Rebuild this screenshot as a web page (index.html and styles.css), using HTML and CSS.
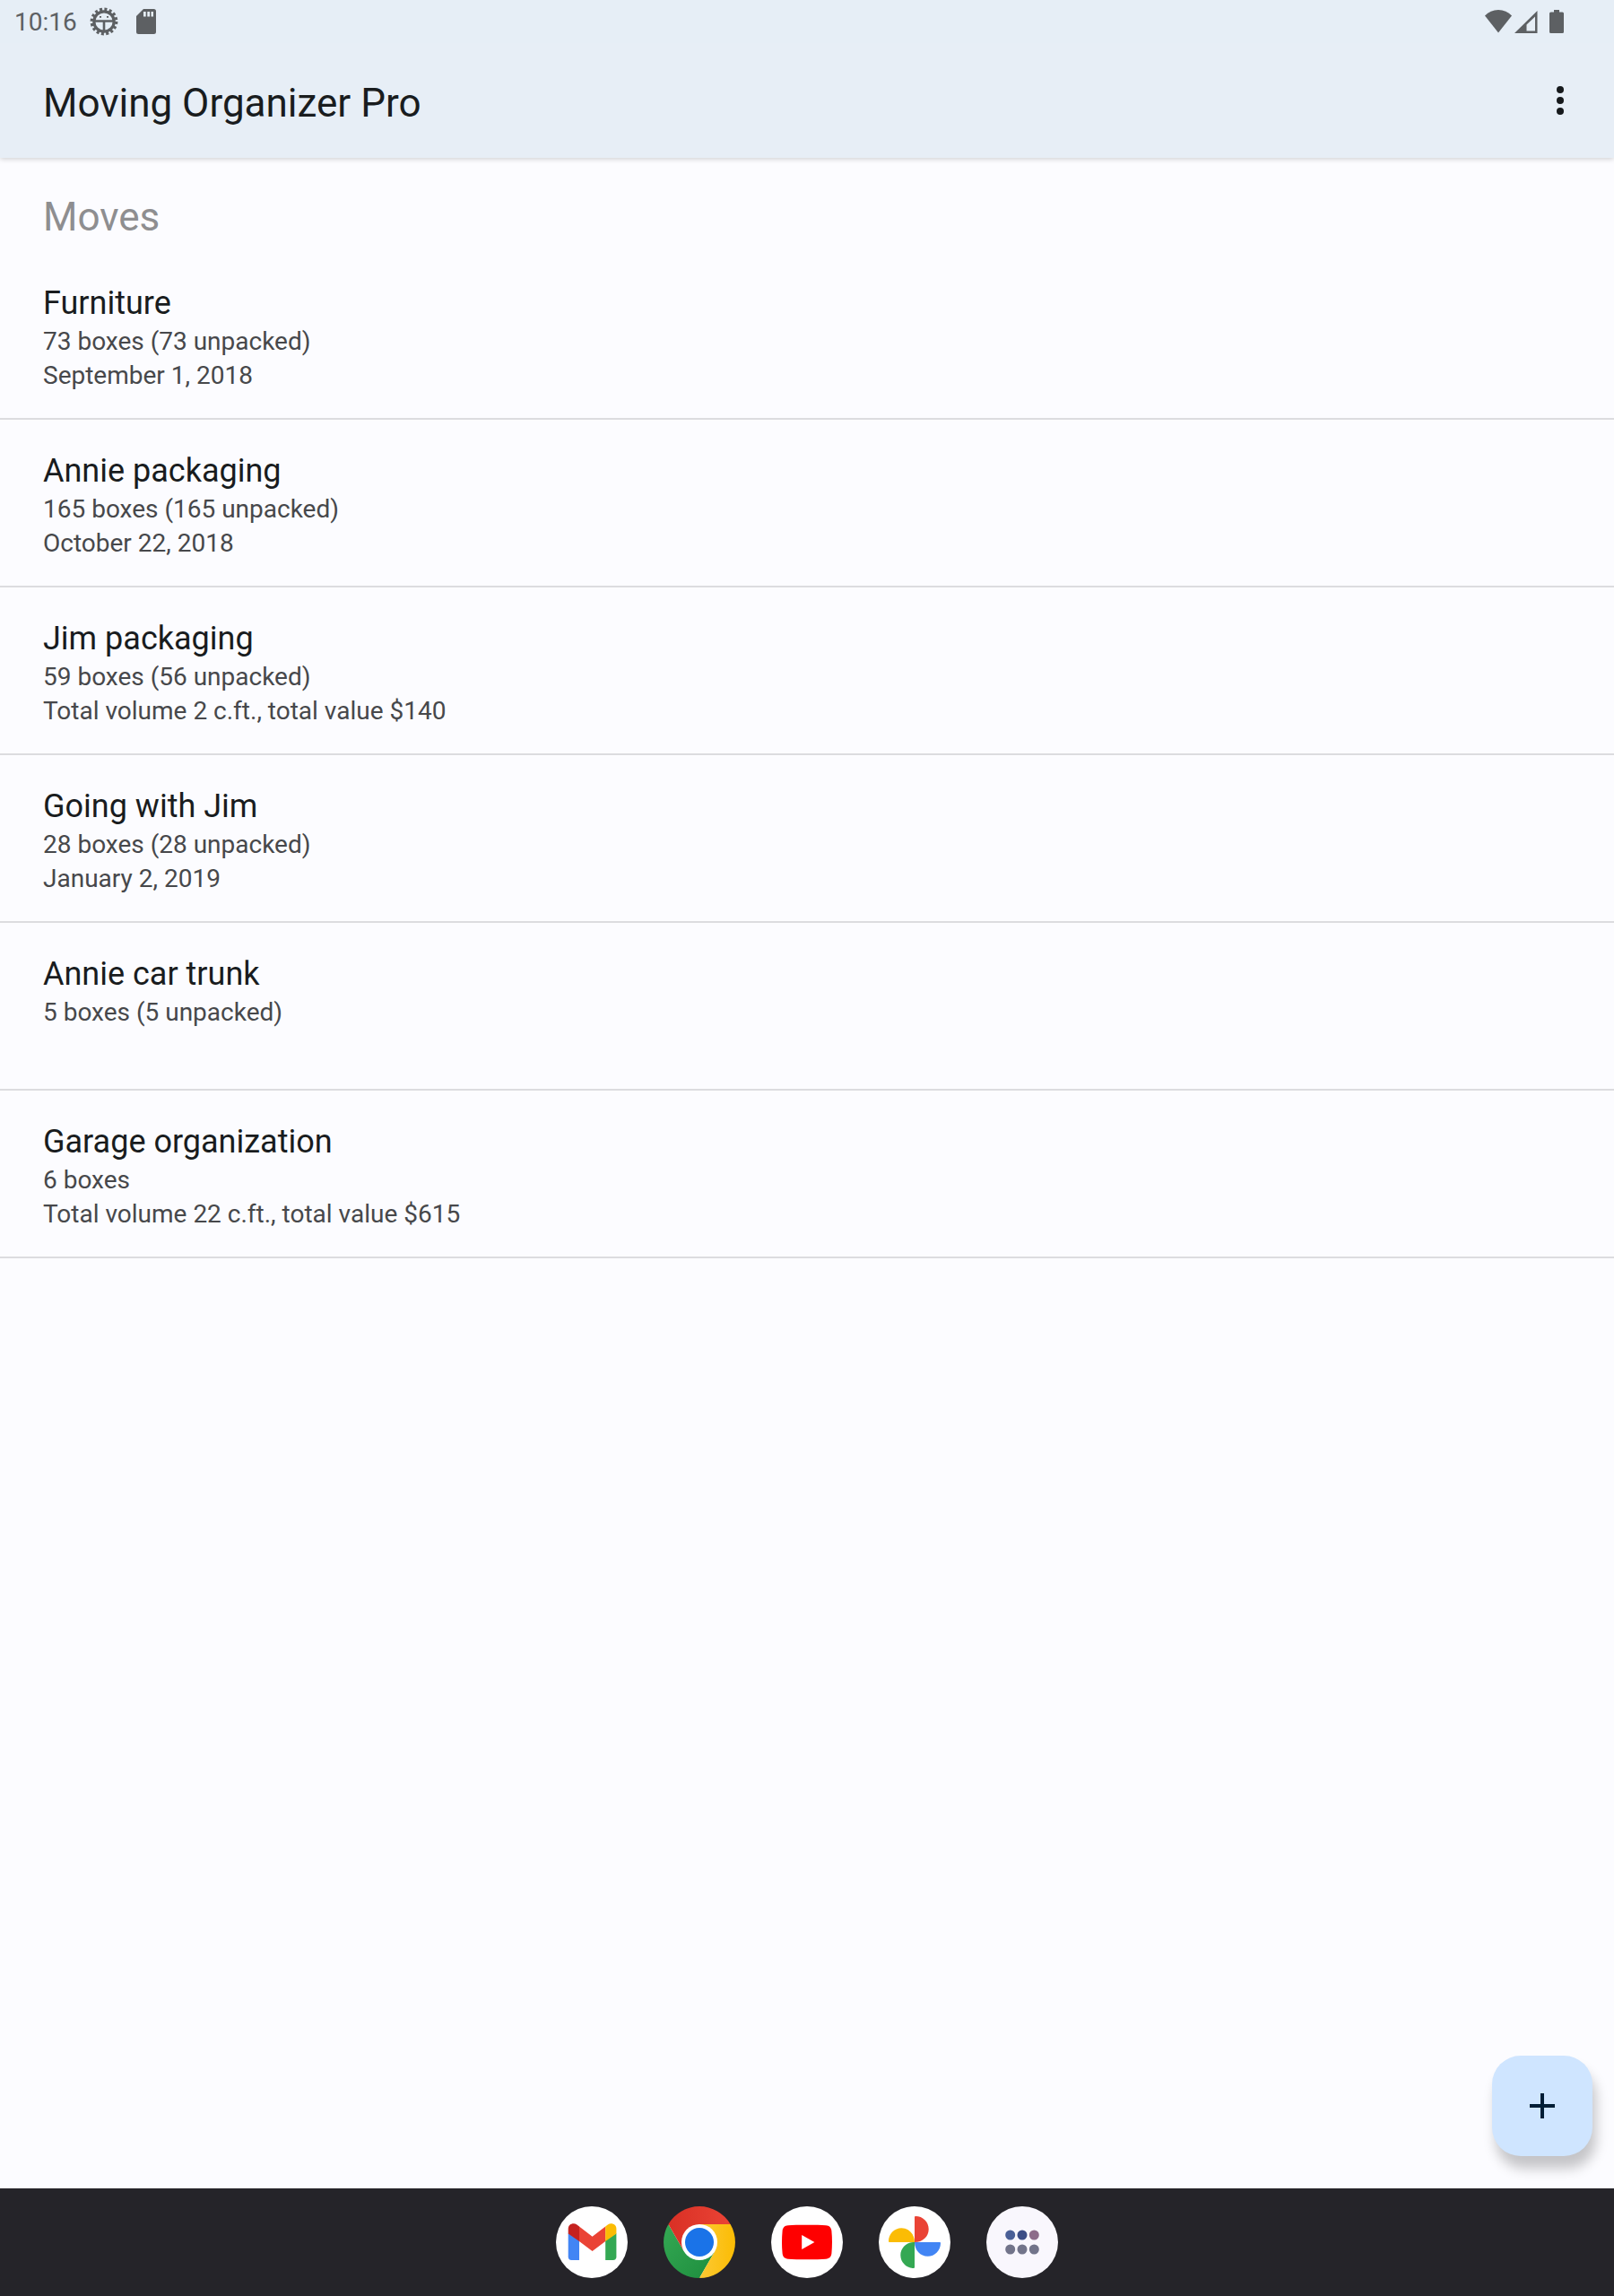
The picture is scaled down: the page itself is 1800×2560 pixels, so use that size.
FILE: index.html
```
<!DOCTYPE html>
<html lang="en">
<head>
    <meta charset="UTF-8">
    <meta name="viewport" content="width=device-width, initial-scale=1.0">
    <title>Moving Organizer Pro</title>
    <link rel="stylesheet" href="styles.css">
</head>
<body>
    <div class="status-bar">
        <div class="status-left">
            <span class="clock">10:16</span>
            <svg class="icon-gear" width="32" height="32" viewBox="0 0 32 32" fill="none" stroke="#5d6063">
                <circle cx="16" cy="16" r="13.7" stroke-width="3.4" stroke-dasharray="3 2.38"/>
                <circle cx="16" cy="16" r="11.2" stroke-width="3.2"/>
                <path d="M5 15.500h22M16 16v11" stroke-width="2.6"/>
                <path d="M11 10.800h2M19 10.800h2" stroke-width="1.8"/>
            </svg>
            <svg width="22" height="28" viewBox="0 0 22 28">
                <path fill="#5d6063" fill-rule="evenodd" d="M8 0h11.500a2.500 2.500 0 0 1 2.500 2.500v23a2.500 2.500 0 0 1-2.500 2.500h-17A2.500 2.500 0 0 1 0 25.500V8zM8 3v5.500h2.700V3zM12.300 3v5.500H15V3zM16.500 3v5.500h2.500V3z"/>
            </svg>
        </div>
        <div class="status-right">
            <svg width="30" height="26" viewBox="0 0 30 26">
                <path fill="#5d6063" d="M15 25.500L0 6.500C4 2.300 9 0 15 0s11 2.300 15 6.500z"/>
            </svg>
            <svg class="icon-signal" width="26" height="26" viewBox="0 0 26 26">
                <path fill="#5d6063" fill-rule="evenodd" d="M25.500 1v25H0zM23 7.500L13.500 16.500v7H23z"/>
            </svg>
            <svg width="16" height="26" viewBox="0 0 16 26">
                <path fill="#5d6063" d="M5 0h6v2.500h3.500A1.500 1.500 0 0 1 16 4v20.500a1.500 1.500 0 0 1-1.500 1.500h-13A1.500 1.500 0 0 1 0 24.500V4a1.500 1.500 0 0 1 1.500-1.500H5z"/>
            </svg>
        </div>
    </div>

    <header class="app-bar">
        <h1>Moving Organizer Pro</h1>
        <button type="button" class="menu-button" aria-label="More options">
            <svg width="8" height="32" viewBox="0 0 8 32" fill="#16191c">
                <circle cx="4" cy="4" r="4"/>
                <circle cx="4" cy="16" r="4"/>
                <circle cx="4" cy="28" r="4"/>
            </svg>
        </button>
    </header>

    <main>
        <h2>Moves</h2>
        <ul class="moves">
            <li>
                <a href="#furniture">
                    <span class="name">Furniture</span>
                    <span class="info">73 boxes (73 unpacked)</span>
                    <span class="info">September 1, 2018</span>
                </a>
            </li>
            <li>
                <a href="#annie-packaging">
                    <span class="name">Annie packaging</span>
                    <span class="info">165 boxes (165 unpacked)</span>
                    <span class="info">October 22, 2018</span>
                </a>
            </li>
            <li>
                <a href="#jim-packaging">
                    <span class="name">Jim packaging</span>
                    <span class="info">59 boxes (56 unpacked)</span>
                    <span class="info">Total volume 2 c.ft., total value $140</span>
                </a>
            </li>
            <li>
                <a href="#going-with-jim">
                    <span class="name">Going with Jim</span>
                    <span class="info">28 boxes (28 unpacked)</span>
                    <span class="info">January 2, 2019</span>
                </a>
            </li>
            <li>
                <a href="#annie-car-trunk">
                    <span class="name">Annie car trunk</span>
                    <span class="info">5 boxes (5 unpacked)</span>
                    <span class="info"></span>
                </a>
            </li>
            <li>
                <a href="#garage-organization">
                    <span class="name">Garage organization</span>
                    <span class="info">6 boxes</span>
                    <span class="info">Total volume 22 c.ft., total value $615</span>
                </a>
            </li>
        </ul>
        <button type="button" class="add-button" aria-label="Add move">
            <svg width="28" height="28" viewBox="0 0 28 28">
                <path d="M14 0v28M0 14h28" stroke="#001d35" stroke-width="4"/>
            </svg>
        </button>
    </main>

    <nav class="taskbar">
        <a href="#gmail" aria-label="Gmail">
            <svg viewBox="0 0 80 80">
                <circle cx="40" cy="40" r="40" fill="#fff"/>
                <path fill="#4285f4" d="M13.700 30l12.300 8v22h-8.600a3.700 3.700 0 0 1-3.700-3.700z"/>
                <path fill="#34a853" d="M55.200 38l12.200-8v26.300a3.700 3.700 0 0 1-3.700 3.700h-8.500z"/>
                <path fill="#ea4335" d="M26 22.500l14.600 11.200 14.600-11.200V39L40.600 50 26 39z"/>
                <path fill="#c5221f" d="M13.700 25c0-5.200 5.900-7.200 9.700-4.500L26 22.500V39l-12.300-8.500z"/>
                <path fill="#fbbc04" d="M67.400 25c0-5.200-5.900-7.200-9.600-4.500l-2.600 2V39l12.200-8.500z"/>
            </svg>
        </a>
        <a href="#chrome" aria-label="Chrome">
            <svg viewBox="0 0 80 80">
                <defs>
                    <linearGradient id="chromeRed" x1="0" x2="1"><stop offset="0" stop-color="#d93025"/><stop offset="1" stop-color="#ea4335"/></linearGradient>
                    <linearGradient id="chromeGreen" x1="0" x2="1" y1="0" y2="1"><stop offset="0" stop-color="#34a853"/><stop offset="1" stop-color="#1e8e3e"/></linearGradient>
                    <linearGradient id="chromeYellow" x1="1" x2="0"><stop offset="0" stop-color="#fbbc04"/><stop offset="1" stop-color="#fcc934"/></linearGradient>
                </defs>
                <circle cx="40" cy="40" r="39" fill="#fff"/>
                <path fill="url(#chromeGreen)" d="M5.400 20L22.700 50L40 60L57.300 50L40 80A40 40 0 0 1 5.400 20z"/>
                <path fill="url(#chromeYellow)" d="M40 20H74.600A40 40 0 0 1 40 80L57.300 50z"/>
                <path fill="url(#chromeRed)" d="M5.400 20A40 40 0 0 1 74.600 20H40L22.700 50z"/>
                <circle cx="40" cy="40" r="20" fill="#fff"/>
                <circle cx="40" cy="40" r="16" fill="#1a73e8"/>
            </svg>
        </a>
        <a href="#youtube" aria-label="YouTube">
            <svg viewBox="0 0 80 80">
                <circle cx="40" cy="40" r="40" fill="#fff"/>
                <path fill="#f00" d="M40 20.700c9 0 16 .1 21 .6 4 .4 6 2.300 6.400 6.200.8 8.300.8 16.700 0 25-.4 3.900-2.400 5.800-6.400 6.200-10 .8-32 .8-42 0-4-.4-6-2.300-6.400-6.200-.8-8.300-.8-16.700 0-25 .4-3.900 2.400-5.800 6.400-6.200 5-.5 12-.6 21-.6z"/>
                <path fill="#fff" d="M34.200 32v16l14.200-8z"/>
            </svg>
        </a>
        <a href="#photos" aria-label="Photos">
            <svg viewBox="0 0 80 80">
                <circle cx="40" cy="40" r="40" fill="#fff"/>
                <path fill="#ea4335" d="M40 11.900a1 1 0 0 1 1-.9c8.200 0 14.700 6.400 14.700 14.400S49.200 40 40 40z"/>
                <path fill="#4285f4" d="M68.100 40a1 1 0 0 1 .9 1c0 8.200-6.400 14.800-14.400 14.800S40 49.200 40 40z"/>
                <path fill="#34a853" d="M40 68.100a1 1 0 0 1-1 .9c-8.200 0-14.700-6.400-14.700-14.400S30.800 40 40 40z"/>
                <path fill="#fbbc04" d="M11.900 40a1 1 0 0 1-.9-1c0-8.200 6.400-14.800 14.400-14.800S40 30.800 40 40z"/>
            </svg>
        </a>
        <button type="button" aria-label="All apps">
            <svg viewBox="0 0 80 80" fill="#72748a">
                <circle cx="40" cy="40" r="40" fill="#f9f7fd"/>
                <circle cx="26.700" cy="32" r="5.500" fill="#4a5f97"/>
                <circle cx="40" cy="32" r="5.500" fill="#3c4d86"/>
                <circle cx="53.300" cy="32" r="5.500" fill="#8d6c8a"/>
                <circle cx="26.700" cy="48" r="5.500"/>
                <circle cx="40" cy="48" r="5.500"/>
                <circle cx="53.300" cy="48" r="5.500"/>
            </svg>
        </button>
    </nav>
</body>
</html>
```
FILE: styles.css
```
* {
    box-sizing: border-box;
}
body {
    font-family: Roboto, "Liberation Sans", sans-serif;
    display: flex;
    flex-direction: column;
    min-height: 100vh;
    margin: 0;
    background-color: #fcfcff;
    color: #191c1e;
}
h1, h2, ul {
    margin: 0;
    padding: 0;
    font-weight: 400;
}
button {
    padding: 0;
    border: none;
    background: none;
    cursor: pointer;
}
svg {
    display: block;
}

/* status bar */
.status-bar {
    display: flex;
    justify-content: space-between;
    height: 48px;
    padding: 0 56px 0 16px;
    background-color: #e6eef6;
    color: #5d6063;
    z-index: 2;
}
.status-left, .status-right {
    display: flex;
    align-items: center;
}
.clock {
    padding-top: 2px;
    font-size: 28px;
    line-height: 48px;
}
.icon-gear {
    margin: 0 20px 0 14px;
}
.icon-signal {
    margin: 0 13px 0 3px;
}

/* app bar */
.app-bar {
    display: flex;
    align-items: center;
    justify-content: space-between;
    height: 128px;
    padding: 0 24px 0 48px;
    background-color: #e7eef6;
    box-shadow: 0 1px 6px rgba(0, 0, 0, 0.2);
    z-index: 1;
}
h1, h2 {
    font-size: 44px;
    line-height: 52px;
}
h1 {
    padding-top: 5px;
}
.menu-button {
    display: flex;
    align-items: center;
    justify-content: center;
    width: 72px;
    height: 96px;
}

/* list of moves */
main {
    position: relative;
    flex: 1;
}
h2 {
    padding: 40px 48px 13px;
    color: #8e8e90;
}
.moves {
    list-style: none;
}
.moves li {
    border-bottom: 2px solid #dcdcdf;
}
.moves a {
    display: block;
    padding: 36px 48px 28px;
    color: inherit;
    text-decoration: none;
}
.name {
    display: block;
    margin-bottom: 3px;
    font-size: 36px;
    line-height: 42px;
}
.info {
    display: block;
    min-height: 38px;
    font-size: 28px;
    line-height: 38px;
    color: #47484b;
}
.add-button {
    position: absolute;
    right: 24px;
    bottom: 36px;
    display: flex;
    align-items: center;
    justify-content: center;
    width: 112px;
    height: 112px;
    border-radius: 32px;
    background-color: #cfe5ff;
    box-shadow: 4px 14px 14px rgba(0, 0, 0, 0.22);
}

/* taskbar */
.taskbar {
    position: relative;
    display: flex;
    align-items: center;
    justify-content: center;
    gap: 40px;
    height: 120px;
    background-color: #252429;
}
.taskbar svg {
    width: 80px;
    height: 80px;
}
```
